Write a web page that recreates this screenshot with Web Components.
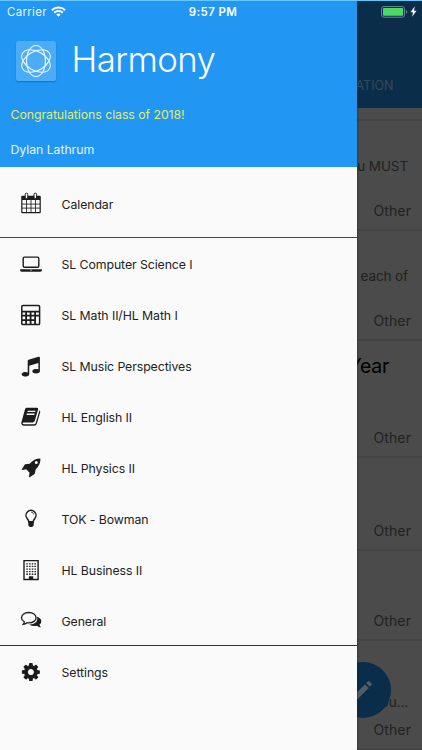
<!DOCTYPE html>
<html lang="en">
<head>
<meta charset="utf-8">
<title>Harmony</title>
<style>
html,body{margin:0;height:100%;overflow:hidden}
body{font-family:Inter,"Liberation Sans",sans-serif;background:#4b4b4b}
</style>
</head>
<body>
<harmony-app></harmony-app>
<script>
const define = (name, html) => customElements.define(name, class extends HTMLElement {
  constructor() {
    super();
    this.attachShadow({ mode: 'open' }).innerHTML = html;
  }
});

const ICONS = {
  calendar: '<path d="M1.4 4.6h19v16.2h-19z" fill="#fafafa"/><path fill-rule="evenodd" d="M2.5 3.7h17q1.3 0 1.3 1.3v15q0 1.3-1.3 1.3h-17q-1.3 0-1.3-1.3V5q0-1.3 1.3-1.3zM2.4 8v12.1h17.2V8z"/><path d="M6.5 8v12.5M11 8v12.5M15.5 8v12.5M2 12.1h18M2 16.1h18" stroke="#1c1c1c" stroke-width=".85"/><rect x="5.2" y="1.2" width="2.6" height="5.2" rx="1.2" fill="#fafafa" stroke="#1c1c1c" stroke-width="1"/><rect x="14" y="1.2" width="2.6" height="5.2" rx="1.2" fill="#fafafa" stroke="#1c1c1c" stroke-width="1"/>',
  laptop: '<rect x="3.2" y="4.1" width="15.6" height="10.2" rx="1.3" fill="none" stroke="#1c1c1c" stroke-width="1.4"/><path d="M.2 16.2h21.6v1.300q0 1.200-1.700 1.200H1.900Q.2 18.700.2 17.500z"/><path d="M10 17.200h2" stroke="#fafafa" stroke-width=".6"/>',
  calculator: '<rect x="1.8" y="1.6" width="17.8" height="19" rx="1.2" fill="none" stroke="#1c1c1c" stroke-width="1.5"/><path d="M2 7.600h17.400M2 11.600h17.400M2 16.100h13M6.100 7.600v13M10.600 7.600v13M15.100 7.600v13" stroke="#1c1c1c" stroke-width="1.800"/>',
  music: '<path transform="translate(.1 .2) scale(.0119)" d="M1664 224v1120q0 50-34 89t-86 60.500-103.500 32-96.500 10.500-96.500-10.500-103.500-32-86-60.500-34-89 34-89 86-60.500 103.500-32 96.500-10.500q105 0 192 39v-537l-768 237v709q0 50-34 89t-86 60.500-103.500 32-96.500 10.500-96.500-10.500-103.500-32-86-60.500-34-89 34-89 86-60.500 103.500-32 96.500-10.500q105 0 192 39v-967q0-31 19-56.500t49-35.500l832-256q12-4 28-4 40 0 68 28t28 68z"/>',
  book: '<path fill-rule="evenodd" d="M6.500 1.800h10.400q1.700 0 1.200 1.700l-3.300 11.300q-.5 1.700-2.200 1.700H3.800q-1.200 0-1.200.8 0 1 1.500 1h10.200q1 0 1.300-1l3.600-12q.1-.5 0-1 1.400.5 1 2l-3.400 11.500q-.5 1.900-2.500 1.900H3.900Q1.800 19.700 1.400 18q-.3-.9 0-1.800L5 3.300q.4-1.500 1.500-1.500zM7.800 4.700l-.4 1.400h7.800l.4-1.400zM6.900 7.600 6.500 9h7.800l.4-1.400z"/>',
  rocket: '<path fill-rule="evenodd" d="M20.400 1.500q.5 5.900-4.600 10.800L14.600 17l-5 3.300q-.8.2-.7-.6l.7-4-3.400-3.400-4 .6q-.7 0-.4-.7L5 7.300l4.700-.6Q14.300 1.300 20.400 1.500zM16.300 4a1.500 1.500 0 1 0 0 3 1.500 1.500 0 0 0 0-3z"/>',
  bulb: '<path d="M8.800 13.800Q8.600 12 7.200 10.600A5 5 0 1 1 14.800 10.600Q13.400 12 13.200 13.800z" fill="none" stroke="#1c1c1c" stroke-width="1.500"/><path d="M11 4q2.600.2 2.800 2.500" fill="none" stroke="#1c1c1c" stroke-width=".7"/><path d="M8.100 13.500h5.800l-.3 4-1.500 1.600H9.900l-1.500-1.600z"/>',
  building: '<path fill-rule="evenodd" d="M3.300.9h15.500v20.300H3.300zm1.400 1.400v17.500h4.200v-2.600h4.300v2.600h4.200V2.300z"/><path d="M7.100 4.200V17M9.800 4.200V17M12.500 4.200V17M15.200 4.200V17" stroke="#1c1c1c" stroke-width="1.500" stroke-dasharray="1.300 1.300"/>',
  comments: '<path d="M16.700 6.800q4.900 1.300 4.600 5-.2 1.800-1.900 3 .4 1.400 1.700 2.400-2.200.1-4.200-1.500-4.200 1-7.800-1.200 6.900 0 8.100-4.400.4-1.700-.5-3.300z"/><path d="M8.800 2.500c4.200 0 7.300 2.300 7.300 5.200s-3.100 5.200-7.300 5.200q-1 0-1.900-.2-1.600 1.300-3.700 1.600.9-1.100 1.100-2.500Q1.500 10.200 1.500 7.700c0-2.900 3.100-5.200 7.300-5.200z" fill="#fafafa" stroke="#1c1c1c" stroke-width="1.300"/>',
  cog: '<path transform="translate(.4 .6) scale(.0117)" fill-rule="evenodd" d="M1152 896q0-106-75-181t-181-75-181 75-75 181 75 181 181 75 181-75 75-181zm512-109v222q0 12-8 23t-20 13l-185 28q-19 54-39 91 35 50 107 138 10 12 10 25t-9 23q-27 37-99 108t-94 71q-12 0-26-9l-138-108q-44 23-91 38-16 136-29 186-7 28-36 28h-222q-14 0-24.500-8.500t-11.500-21.500l-28-184q-49-16-90-37l-141 107q-10 9-25 9-14 0-25-11-126-114-165-168-7-10-7-23 0-12 8-23 15-21 51-66.500t54-70.500q-27-50-41-99l-183-27q-13-2-21-12.500t-8-23.500v-222q0-12 8-23t19-13l186-28q14-46 39-92-40-57-107-138-10-12-10-24 0-10 9-23 26-36 98.500-107.500t94.500-71.500q13 0 26 10l138 107q44-23 91-38 16-136 29-186 7-28 36-28h222q14 0 24.500 8.500t11.500 21.500l28 184q49 16 90 37l142-107q9-9 24-9 13 0 25 10 129 119 165 170 7 8 7 22 0 12-8 23-15 21-51 66.500t-54 70.500q26 50 41 98l183 28q13 2 21 12.500t8 23.500z"/>'
};

customElements.define('menu-item', class extends HTMLElement {
  connectedCallback() {
    this.attachShadow({ mode: 'open' }).innerHTML = `
<style>
:host{display:flex;align-items:center;height:50.9px;padding-left:20px;box-sizing:border-box;color:#222;font-size:12.300px;letter-spacing:-.08px;white-space:nowrap}
svg{width:22px;height:22px;margin-right:19.500px;fill:#1c1c1c;flex:none}
:host([icon=calendar]) svg{margin-bottom:2px}
span{padding-top:1px}
</style>
<svg viewBox="0 0 22 22">${ICONS[this.getAttribute('icon')]}</svg><span><slot></slot></span>`;
  }
});

define('harmony-logo', `
<style>
:host{display:flex;align-items:center;justify-content:center;width:40px;height:40px;border-radius:2.500px;background:#4dacf6;box-shadow:0 1px 1.500px #1b6fb8}
svg{width:32px;height:34px;fill:none;stroke:#eef8ff;stroke-width:1.050}
</style>
<svg viewBox="-16 -17 32 34"><ellipse rx="9.500" ry="15.500"/><ellipse rx="9.500" ry="15.500" transform="rotate(60)"/><ellipse rx="9.500" ry="15.500" transform="rotate(-60)"/></svg>`);

define('drawer-header', `
<style>
:host{display:block;height:167px;box-sizing:border-box;padding:41px 0 0 16px;background:#2196f3;color:#fff}
.brand{display:flex;align-items:flex-start;height:59px}
h1{margin:-6px 0 0 15.500px;font-weight:300;font-size:34.800px;line-height:48px;letter-spacing:-.6px}
p{margin:0 0 0 -5.500px;font-size:12.300px;line-height:18px;letter-spacing:-.05px}
.note{color:#e3ec62;margin-top:6px}
.user{color:#e6f4ff;margin-top:17px}
</style>
<div class="brand"><harmony-logo></harmony-logo><h1>Harmony</h1></div>
<p class="note"><span>Congratulations class of 2018!</span></p>
<p class="user"><span>Dylan Lathrum</span></p>`);

define('nav-drawer', `
<style>
:host{display:flex;flex-direction:column;width:356.500px;height:750px;background:#fafafa;box-shadow:0 0 2px #222}
.top{height:71px;box-sizing:border-box;padding-top:11.500px;border-bottom:1px solid #444}
.mid{height:408px;padding-top:1px;border-bottom:1px solid #333;box-sizing:border-box}
.end{padding-top:1px}
</style>
<drawer-header></drawer-header>
<div class="top"><menu-item icon="calendar">Calendar</menu-item></div>
<div class="mid">
<menu-item icon="laptop">SL Computer Science I</menu-item>
<menu-item icon="calculator">SL Math II/HL Math I</menu-item>
<menu-item icon="music">SL Music Perspectives</menu-item>
<menu-item icon="book">HL English II</menu-item>
<menu-item icon="rocket">HL Physics II</menu-item>
<menu-item icon="bulb">TOK - Bowman</menu-item>
<menu-item icon="building">HL Business II</menu-item>
<menu-item icon="comments">General</menu-item>
</div>
<div class="end"><menu-item icon="cog">Settings</menu-item></div>`);

define('status-bar', `
<style>
:host{display:grid;grid-template-columns:1fr auto 1fr;align-items:center;height:22px;padding:0 5px 0 7px;box-sizing:border-box;color:#fff;font-size:11.500px;border-top:1px solid #64c8fa}
.l,.r{display:flex;align-items:center;gap:4.500px}.r{justify-content:flex-end;gap:2.500px}
.l{letter-spacing:.3px;color:#e9f5ff}
b{font-weight:600;font-size:11.500px;letter-spacing:.35px;padding-left:2px}
</style>
<div class="l"><span>Carrier</span><svg width="15" height="11" viewBox="0 0 15 11"><g fill="none" stroke="#fff" stroke-width="1.900"><path d="M.8 4.200a9.600 9.600 0 0 1 13.400 0M3.200 6.700a6.200 6.200 0 0 1 8.600 0"/></g><path d="M5.300 8.400a3.300 3.300 0 0 1 4.400 0L7.500 10.700z" fill="#fff"/></svg></div>
<b>9:57 PM</b>
<div class="r"><svg width="27" height="12" viewBox="0 0 27 12"><rect x=".6" y=".6" width="23" height="10.600" rx="2.300" fill="none" stroke="#6f8594" stroke-width="1"/><rect x="2" y="2" width="20.200" height="7.800" rx="1" fill="#4cd964"/><path d="M25 4q1.200.4 1.200 1.900T25 7.800z" fill="#6f8594"/></svg><svg width="7" height="11" viewBox="0 0 7 11"><path d="M4.800.3.500 6.200h2.600L2 10.700l4.500-6H3.900z" fill="#fff"/></svg></div>`);

define('feed-card', `
<style>
:host{display:flex;flex-direction:column;justify-content:flex-end;align-items:flex-end;box-sizing:border-box;border-bottom:2px solid #444;padding:0 11px 9.500px 0;color:#222;font-size:14px;letter-spacing:.1px;white-space:nowrap;overflow:hidden}
.o{line-height:19px}
</style>
<slot></slot><span class="o">Other</span>`);

define('feed-page', `
<style>
:host{display:flex;flex-direction:column;width:422px;height:750px;background:#4b4b4b}
header{flex:none;height:108px;box-sizing:border-box;background:#0a2d49;display:flex;justify-content:flex-end;padding:76px 28.500px 0 0;font-size:12.500px;line-height:19px;color:#36495a}
.gap{height:11px;flex:none;border-bottom:2px solid #444}
feed-card{flex:none}
feed-card span{line-height:19px;margin:0 3px 25px 0;font-size:13.500px;letter-spacing:-.1px}
feed-card .title{font-size:19.500px;line-height:26px;color:#000;margin:0 32px 48.500px 0;letter-spacing:-.3px;margin-right:22px}
feed-card .low{margin-bottom:8px}
</style>
<header><span>INFORMATION</span></header>
<div class="gap"></div>
<feed-card style="height:110px"><span>you MUST</span></feed-card>
<feed-card style="height:110px"><span>each of</span></feed-card>
<feed-card style="height:117px"><span class="title">Year</span></feed-card>
<feed-card style="height:93px"></feed-card>
<feed-card style="height:90px"></feed-card>
<feed-card style="height:109px"><span class="low">you...</span></feed-card>`);

define('edit-button', `
<style>
:host{display:flex;align-items:center;justify-content:center;width:56px;height:56px;border-radius:50%;background:#0a2d49}
</style>
<svg width="24" height="24" viewBox="0 0 24 24"><path fill="#525d66" d="M3 17.250V21h3.750L17.810 9.940l-3.750-3.750L3 17.250zM20.710 7.040c.39-.39.39-1.020 0-1.410l-2.340-2.340c-.39-.39-1.020-.39-1.410 0l-1.830 1.830 3.750 3.750 1.830-1.830z"/></svg>`);

define('harmony-app', `
<style>
:host{display:block;position:relative;width:422px;height:750px;overflow:hidden}
edit-button{position:absolute;left:335px;top:662px}
nav-drawer{position:absolute;left:0;top:0}
status-bar{position:absolute;left:0;top:0;width:422px}
</style>
<feed-page></feed-page>
<edit-button></edit-button>
<nav-drawer></nav-drawer>
<status-bar></status-bar>`);
</script>
</body>
</html>
